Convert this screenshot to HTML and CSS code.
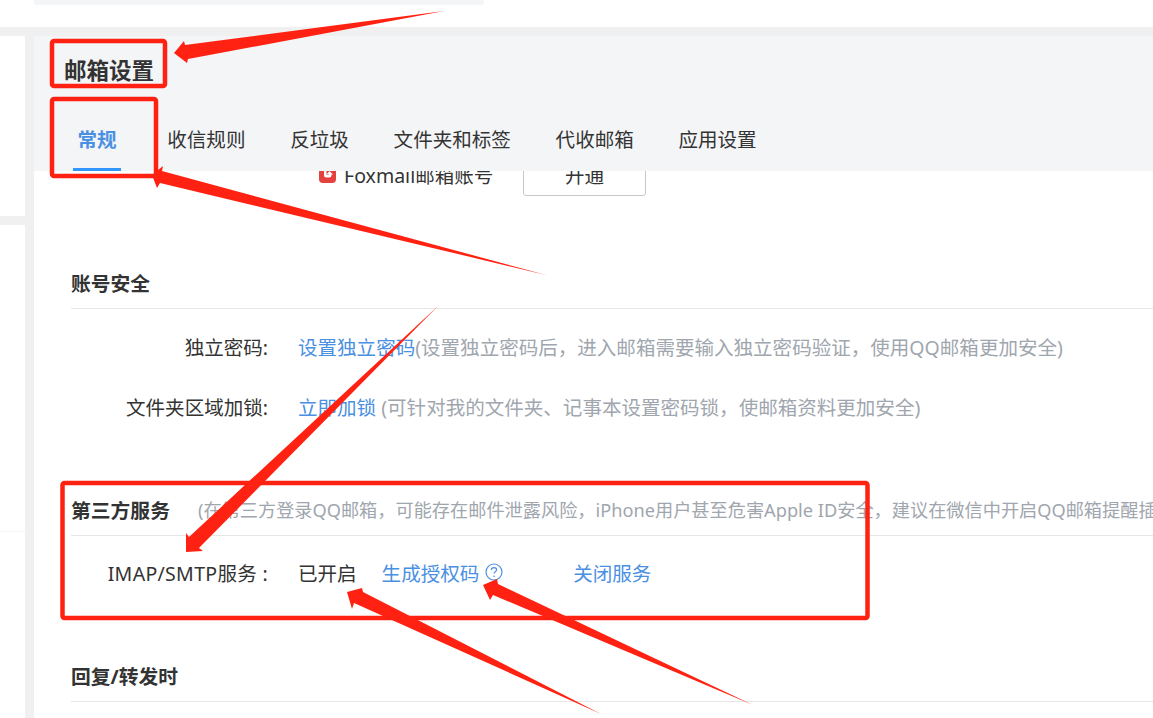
FILE: index.html
```html
<!DOCTYPE html>
<html lang="zh-CN">
<head>
<meta charset="utf-8">
<title>邮箱设置</title>
<link rel="stylesheet" href="styles.css">
</head>
<body>
<div class="page">
  <div class="topbar"><div class="topstrip"></div></div>
  <div class="shell">
    <aside class="side">
      <div class="side-panel side-short"></div>
      <div class="side-panel side-long"><div class="side-divider"></div></div>
    </aside>
    <main class="main">
      <header class="head">
        <h1 class="title">邮箱设置</h1>
        <nav class="tabs">
          <a class="tab tab-active">常规</a>
          <a class="tab">收信规则</a>
          <a class="tab">反垃圾</a>
          <a class="tab">文件夹和标签</a>
          <a class="tab">代收邮箱</a>
          <a class="tab">应用设置</a>
        </nav>
      </header>
      <div class="content">
        <div class="fox-row">
          <div class="fox-inner">
            <svg class="fox-icon" viewBox="0 0 17 17" width="17" height="17" aria-hidden="true">
              <path d="M3 0h11a3 3 0 0 1 3 3v10a4 4 0 0 1-4 4H4a4 4 0 0 1-4-4V3a3 3 0 0 1 3-3z" fill="#e4423f"/>
              <path d="M5 3v6a2.500 2.500 0 0 0 2.500 2.500H10a2.500 2.500 0 0 0 2.500-2.500V8.500H14L10.500 5 7.500 8.500H10V9H7.500V3z" fill="#fff"/>
            </svg>
            <span class="fox-text">Foxmail邮箱账号</span>
            <button class="fox-btn" type="button">开通</button>
          </div>
        </div>

        <section class="section section-account">
          <div class="section-head"><h2 class="section-title">账号安全</h2></div>
          <div class="rows rows-account">
            <div class="row"><span class="label">独立密码:</span><span class="value"><a class="link">设置独立密码</a><span class="note">(设置独立密码后，进入邮箱需要输入独立密码验证，使用QQ邮箱更加安全)</span></span></div>
            <div class="row"><span class="label">文件夹区域加锁:</span><span class="value"><a class="link">立即加锁</a><span class="note"> (可针对我的文件夹、记事本设置密码锁，使邮箱资料更加安全)</span></span></div>
          </div>
        </section>

        <section class="section section-third">
          <div class="section-head"><h2 class="section-title">第三方服务</h2><span class="note head-note">(在第三方登录QQ邮箱，可能存在邮件泄露风险，iPhone用户甚至危害Apple ID安全，建议在微信中开启QQ邮箱提醒插件</span></div>
          <div class="row row-imap">
            <span class="label label-imap">IMAP/SMTP服务 :</span>
            <span class="value value-imap">
              <span class="status">已开启</span>
              <a class="link link-code">生成授权码</a>
              <svg class="help" viewBox="0 0 18 18" width="18" height="18" aria-hidden="true">
                <circle cx="9" cy="9" r="8" fill="none" stroke="#4a90e2" stroke-width="1.200"/>
                <path d="M6.400 7c0-1.500 1.100-2.400 2.600-2.400s2.600.9 2.600 2.200c0 1.900-2.600 1.900-2.600 3.800" fill="none" stroke="#4a90e2" stroke-width="1.200"/>
                <circle cx="9" cy="13.200" r=".8" fill="#4a90e2"/>
              </svg>
              <a class="link link-close">关闭服务</a>
            </span>
          </div>
        </section>

        <section class="section section-reply">
          <div class="section-head"><h2 class="section-title">回复/转发时</h2></div>
        </section>
      </div>
    </main>
  </div>
</div>

<svg class="marks" viewBox="0 0 1153 718" width="1153" height="718" aria-hidden="true">
  <rect class="mark-box" x="52" y="41" width="113" height="45" rx="2"/>
  <rect class="mark-box" x="52" y="99" width="104" height="77" rx="2"/>
  <rect class="mark-box" x="62.500" y="483" width="805" height="135" rx="2"/>
  <polygon class="mark-arrow" points="444,11 185,45 184,41 174,53 187,63 188,59"/>
  <polygon class="mark-arrow" points="546,275 162,171 163,166 152,175 157,188 160,183"/>
  <polygon class="mark-arrow" points="438,306 199,548 203,551 186,552 186,533 189,537"/>
  <polygon class="mark-arrow" points="601,714 363,592 362,588 347,592 352,609 354,603"/>
  <polygon class="mark-arrow" points="753,705 498,584 497,579 483,585 490,600 493,595"/>
</svg>
</body>
</html>
```

FILE: styles.css
```css
* { box-sizing: border-box; }

html, body {
  margin: 0;
  height: 718px;
  overflow: hidden;
  background: #fff;
}

body {
  position: relative;
  font-family: "Noto Sans", "Noto Sans CJK SC", sans-serif;
  font-size: 19.550px;
  color: #333;
}

.page {
  display: flex;
  flex-direction: column;
  height: 718px;
}

.topbar { height: 27px; background: #fff; }

.topstrip {
  width: 450px;
  height: 5px;
  margin-left: 34px;
  background: #f4f5f7;
  border-radius: 0 0 3px 3px;
}

.shell {
  flex: 1;
  min-height: 0;
  display: grid;
  grid-template-columns: 25px 1fr;
  column-gap: 9px;
  padding-top: 9px;
  background: #f0f0f0;
}

.side {
  display: flex;
  flex-direction: column;
  row-gap: 9px;
}

.side-panel { background: #fff; }
.side-short { height: 180px; }
.side-long { flex: 1; padding-top: 306px; }
.side-divider { height: 1px; background: #f5f5f5; }

.main {
  display: flex;
  flex-direction: column;
  min-width: 0;
  background: #fff;
  overflow: hidden;
}

.head {
  height: 135px;
  flex: none;
  padding: 17px 0 0 31px;
  background: #f4f5f7;
}

.title {
  margin: 0 0 0 -1px;
  font-size: 22.500px;
  line-height: 36px;
  font-weight: 700;
}

.tabs {
  display: flex;
  column-gap: 44.800px;
  margin-top: 15px;
  padding-left: 12.500px;
}

.tab {
  height: 67px;
  line-height: 42px;
  padding-top: 15px;
  white-space: nowrap;
}

.tab-active {
  position: relative;
  color: #4a90e2;
  font-weight: 700;
  width: 39px;
  margin-right: 6px;
}

.tab-active::after {
  content: "";
  position: absolute;
  left: -4.500px;
  right: -4.500px;
  bottom: 0;
  height: 3px;
  background: #3296fa;
}

.content {
  flex: 1;
  min-height: 0;
  padding-left: 37px;
}

.fox-row {
  display: flex;
  align-items: flex-end;
  height: 25px;
  overflow: hidden;
}

.fox-inner {
  flex: none;
  display: flex;
  align-items: center;
  height: 40px;
  padding-left: 248px;
}

.fox-icon { flex: none; margin-bottom: 4px; }

.fox-text {
  margin-left: 8px;
  margin-bottom: 4px;
  width: 179px;
  white-space: nowrap;
}

.fox-btn {
  width: 123px;
  height: 40px;
  padding: 0 0 4px;
  font: inherit;
  color: #333;
  background: #fff;
  border: 1px solid #c8c8c8;
  border-radius: 3px;
}

.section-account { margin-top: 64px; }
.section-third { margin-top: 49px; }
.section-reply { margin-top: 41px; }

.section-head {
  display: flex;
  align-items: center;
  height: 49px;
  border-bottom: 1px solid #e6e6e6;
  white-space: nowrap;
}

.section-title {
  margin: 0;
  font-size: 19.800px;
  font-weight: 700;
  line-height: 30px;
}

.head-note {
  margin-left: 28px;
  margin-top: -4px;
  font-size: 18.200px;
}

.rows-account { padding-top: 9px; }

.row {
  display: flex;
  align-items: center;
  height: 60px;
  padding-bottom: 4px;
  white-space: nowrap;
}

.row-imap { height: 76px; }

.label {
  width: 197px;
  flex: none;
  text-align: right;
}

.label-imap { letter-spacing: .3px; }

.value {
  margin-left: 30px;
  display: flex;
  align-items: center;
  white-space: pre;
}

.link { color: #4a90e2; }
.note { color: #a0a6ae; }

.link-code { margin-left: 25px; }
.help { margin-left: 6px; flex: none; }
.link-close { margin-left: 70px; }

.marks {
  position: absolute;
  left: 0;
  top: 0;
  pointer-events: none;
}

.mark-box {
  fill: none;
  stroke: #ff2212;
  stroke-width: 4.500;
}

.mark-arrow { fill: #ff2212; }
```
